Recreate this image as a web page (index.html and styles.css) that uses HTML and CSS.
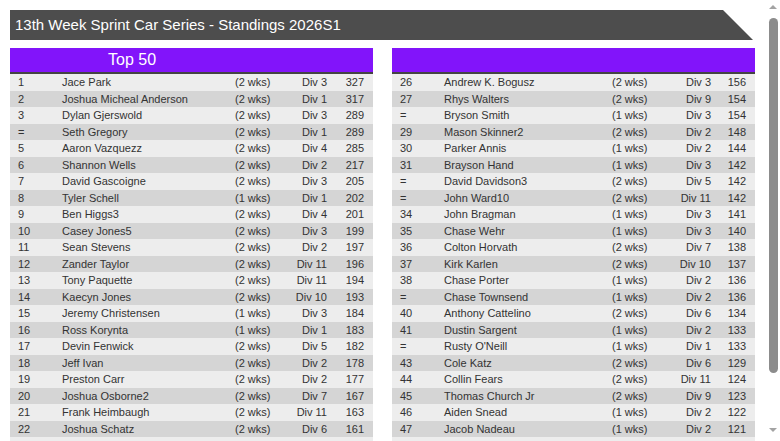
FILE: index.html
```html
<!DOCTYPE html>
<html>
<head>
<meta charset="utf-8">
<link rel="stylesheet" href="styles.css">
</head>
<body>
<div class="page">
  <div class="title">13th Week Sprint Car Series - Standings 2026S1</div>
  <div class="tables">
    <div class="board left">
      <div class="board-head"><span class="board-title">Top 50</span></div>
      <div class="rows">
        <div class="row"><span>1</span><span>Jace Park</span><span>(2 wks)</span><span class="r">Div 3</span><span class="r">327</span></div>
        <div class="row"><span>2</span><span>Joshua Micheal Anderson</span><span>(2 wks)</span><span class="r">Div 1</span><span class="r">317</span></div>
        <div class="row"><span>3</span><span>Dylan Gjerswold</span><span>(2 wks)</span><span class="r">Div 3</span><span class="r">289</span></div>
        <div class="row"><span>=</span><span>Seth Gregory</span><span>(2 wks)</span><span class="r">Div 1</span><span class="r">289</span></div>
        <div class="row"><span>5</span><span>Aaron Vazquezz</span><span>(2 wks)</span><span class="r">Div 4</span><span class="r">285</span></div>
        <div class="row"><span>6</span><span>Shannon Wells</span><span>(2 wks)</span><span class="r">Div 2</span><span class="r">217</span></div>
        <div class="row"><span>7</span><span>David Gascoigne</span><span>(2 wks)</span><span class="r">Div 3</span><span class="r">205</span></div>
        <div class="row"><span>8</span><span>Tyler Schell</span><span>(1 wks)</span><span class="r">Div 1</span><span class="r">202</span></div>
        <div class="row"><span>9</span><span>Ben Higgs3</span><span>(2 wks)</span><span class="r">Div 4</span><span class="r">201</span></div>
        <div class="row"><span>10</span><span>Casey Jones5</span><span>(2 wks)</span><span class="r">Div 3</span><span class="r">199</span></div>
        <div class="row"><span>11</span><span>Sean Stevens</span><span>(2 wks)</span><span class="r">Div 2</span><span class="r">197</span></div>
        <div class="row"><span>12</span><span>Zander Taylor</span><span>(2 wks)</span><span class="r">Div 11</span><span class="r">196</span></div>
        <div class="row"><span>13</span><span>Tony Paquette</span><span>(2 wks)</span><span class="r">Div 11</span><span class="r">194</span></div>
        <div class="row"><span>14</span><span>Kaecyn Jones</span><span>(2 wks)</span><span class="r">Div 10</span><span class="r">193</span></div>
        <div class="row"><span>15</span><span>Jeremy Christensen</span><span>(1 wks)</span><span class="r">Div 3</span><span class="r">184</span></div>
        <div class="row"><span>16</span><span>Ross Korynta</span><span>(1 wks)</span><span class="r">Div 1</span><span class="r">183</span></div>
        <div class="row"><span>17</span><span>Devin Fenwick</span><span>(2 wks)</span><span class="r">Div 5</span><span class="r">182</span></div>
        <div class="row"><span>18</span><span>Jeff Ivan</span><span>(2 wks)</span><span class="r">Div 2</span><span class="r">178</span></div>
        <div class="row"><span>19</span><span>Preston Carr</span><span>(2 wks)</span><span class="r">Div 2</span><span class="r">177</span></div>
        <div class="row"><span>20</span><span>Joshua Osborne2</span><span>(2 wks)</span><span class="r">Div 7</span><span class="r">167</span></div>
        <div class="row"><span>21</span><span>Frank Heimbaugh</span><span>(2 wks)</span><span class="r">Div 11</span><span class="r">163</span></div>
        <div class="row"><span>22</span><span>Joshua Schatz</span><span>(2 wks)</span><span class="r">Div 6</span><span class="r">161</span></div>
        <div class="row"><span>23</span><span>Kyle Brennan</span><span>(2 wks)</span><span class="r">Div 4</span><span class="r">160</span></div>
        <div class="row"><span>24</span><span>Mike Dalton</span><span>(1 wks)</span><span class="r">Div 8</span><span class="r">158</span></div>
        <div class="row"><span>25</span><span>Travis Lee</span><span>(2 wks)</span><span class="r">Div 5</span><span class="r">157</span></div>
      </div>
    </div>
    <div class="board right">
      <div class="board-head"></div>
      <div class="rows">
        <div class="row"><span>26</span><span>Andrew K. Bogusz</span><span>(2 wks)</span><span class="r">Div 3</span><span class="r">156</span></div>
        <div class="row"><span>27</span><span>Rhys Walters</span><span>(2 wks)</span><span class="r">Div 9</span><span class="r">154</span></div>
        <div class="row"><span>=</span><span>Bryson Smith</span><span>(1 wks)</span><span class="r">Div 3</span><span class="r">154</span></div>
        <div class="row"><span>29</span><span>Mason Skinner2</span><span>(2 wks)</span><span class="r">Div 2</span><span class="r">148</span></div>
        <div class="row"><span>30</span><span>Parker Annis</span><span>(1 wks)</span><span class="r">Div 2</span><span class="r">144</span></div>
        <div class="row"><span>31</span><span>Brayson Hand</span><span>(1 wks)</span><span class="r">Div 3</span><span class="r">142</span></div>
        <div class="row"><span>=</span><span>David Davidson3</span><span>(2 wks)</span><span class="r">Div 5</span><span class="r">142</span></div>
        <div class="row"><span>=</span><span>John Ward10</span><span>(2 wks)</span><span class="r">Div 11</span><span class="r">142</span></div>
        <div class="row"><span>34</span><span>John Bragman</span><span>(1 wks)</span><span class="r">Div 3</span><span class="r">141</span></div>
        <div class="row"><span>35</span><span>Chase Wehr</span><span>(1 wks)</span><span class="r">Div 3</span><span class="r">140</span></div>
        <div class="row"><span>36</span><span>Colton Horvath</span><span>(2 wks)</span><span class="r">Div 7</span><span class="r">138</span></div>
        <div class="row"><span>37</span><span>Kirk Karlen</span><span>(2 wks)</span><span class="r">Div 10</span><span class="r">137</span></div>
        <div class="row"><span>38</span><span>Chase Porter</span><span>(1 wks)</span><span class="r">Div 2</span><span class="r">136</span></div>
        <div class="row"><span>=</span><span>Chase Townsend</span><span>(1 wks)</span><span class="r">Div 2</span><span class="r">136</span></div>
        <div class="row"><span>40</span><span>Anthony Cattelino</span><span>(2 wks)</span><span class="r">Div 6</span><span class="r">134</span></div>
        <div class="row"><span>41</span><span>Dustin Sargent</span><span>(1 wks)</span><span class="r">Div 2</span><span class="r">133</span></div>
        <div class="row"><span>=</span><span>Rusty O'Neill</span><span>(1 wks)</span><span class="r">Div 1</span><span class="r">133</span></div>
        <div class="row"><span>43</span><span>Cole Katz</span><span>(2 wks)</span><span class="r">Div 6</span><span class="r">129</span></div>
        <div class="row"><span>44</span><span>Collin Fears</span><span>(2 wks)</span><span class="r">Div 11</span><span class="r">124</span></div>
        <div class="row"><span>45</span><span>Thomas Church Jr</span><span>(2 wks)</span><span class="r">Div 9</span><span class="r">123</span></div>
        <div class="row"><span>46</span><span>Aiden Snead</span><span>(1 wks)</span><span class="r">Div 2</span><span class="r">122</span></div>
        <div class="row"><span>47</span><span>Jacob Nadeau</span><span>(1 wks)</span><span class="r">Div 2</span><span class="r">121</span></div>
        <div class="row"><span>48</span><span>Ryan Moore</span><span>(1 wks)</span><span class="r">Div 4</span><span class="r">119</span></div>
        <div class="row"><span>49</span><span>Evan Brooks</span><span>(2 wks)</span><span class="r">Div 8</span><span class="r">118</span></div>
        <div class="row"><span>50</span><span>Lucas Grant</span><span>(1 wks)</span><span class="r">Div 6</span><span class="r">116</span></div>
      </div>
    </div>
  </div>
</div>
<div class="scrollbar" aria-hidden="true">
  <div class="arrow-up"></div>
  <div class="thumb"></div>
  <div class="arrow-down"></div>
</div>
</body>
</html>
```
FILE: styles.css
```css
html, body {
  margin: 0;
  padding: 0;
  background: #ffffff;
  overflow: hidden;
}
.page {
  box-sizing: border-box;
  width: 780px;
  height: 441px;
  overflow-y: scroll;
  padding: 10px 10px 26px 10px;
  font-family: "Liberation Sans", Arial, sans-serif;
}
.title {
  width: 743px;
  height: 30px;
  box-sizing: border-box;
  background: #4d4d4d;
  color: #ffffff;
  font-size: 15px;
  line-height: 30px;
  padding-left: 5px;
  clip-path: polygon(0 0, calc(100% - 30px) 0, 100% 100%, 0 100%);
}
.tables {
  display: flex;
  gap: 19px;
  margin-top: 8px;
}
.board {
  width: 363px;
  flex: none;
}
.board-head {
  height: 24px;
  background: #8214fa;
  border-bottom: 2px solid #444444;
  color: #ffffff;
  font-size: 16px;
  line-height: 24px;
}
.board-title {
  padding-left: 98px;
}
.row {
  display: grid;
  height: 16.5px;
  align-items: center;
  font-size: 11px;
  color: #333333;
  background: #ededed;
}
.left .row {
  grid-template-columns: 52px 173px 60px 36px 42px;
}
.right .row {
  grid-template-columns: 52px 168px 65px 38px 40px;
}
.row:nth-child(even) {
  background: #d5d5d5;
}
.row span:first-child {
  padding-left: 8px;
}
.row .r {
  text-align: right;
  padding-right: 4px;
}
.row .r:last-child {
  padding-right: 9px;
}
.scrollbar {
  position: fixed;
  top: 0;
  right: 0;
  width: 15px;
  height: 441px;
  box-sizing: border-box;
  background: #ffffff;
  display: flex;
  flex-direction: column;
  align-items: center;
  padding: 5px 0 9px 1px;
}
.arrow-up {
  width: 0;
  height: 0;
  border-left: 4px solid transparent;
  border-right: 4px solid transparent;
  border-bottom: 4px solid #a3a3a3;
}
.thumb {
  margin-top: 9px;
  width: 9px;
  height: 355px;
  border-radius: 4.5px;
  background: #8c8c8c;
}
.arrow-down {
  margin-top: auto;
  width: 0;
  height: 0;
  border-left: 4px solid transparent;
  border-right: 4px solid transparent;
  border-top: 4px solid #a3a3a3;
}
```
